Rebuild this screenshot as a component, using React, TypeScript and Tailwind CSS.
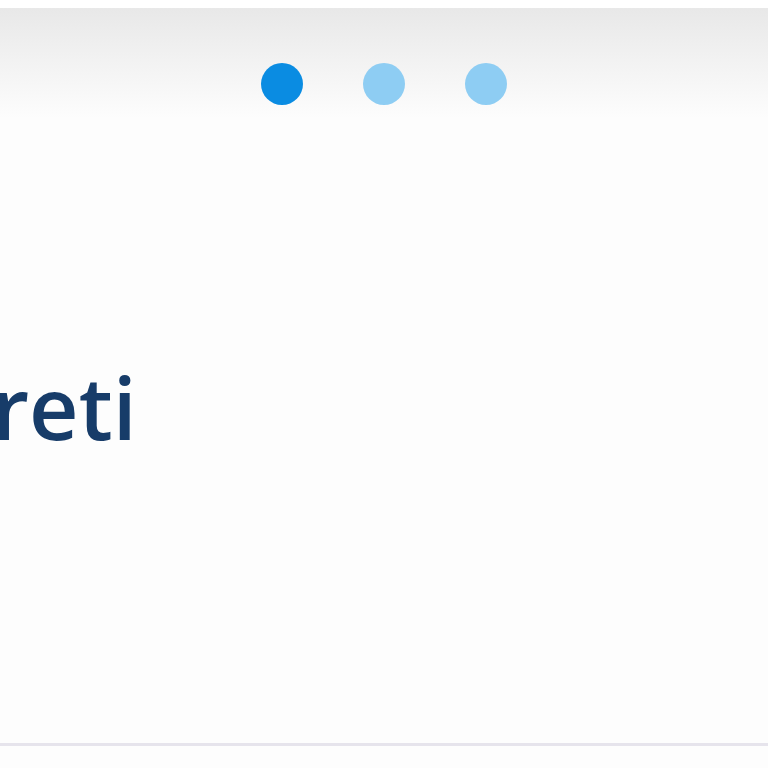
export default function App() {
  return (
    <div className="w-[768px] h-[768px] bg-[#fdfdfd] overflow-hidden flex flex-col" style={{ fontFamily: '"Open Sans", "Noto Sans", sans-serif' }}>
      <div className="h-[8px] bg-white" />
      <div className="h-[110px] bg-gradient-to-b from-[#e8e8e8] to-[#fdfdfd] flex justify-center gap-[60px] pt-[55px]">
        <div className="w-[42px] h-[42px] rounded-full bg-[#0a8ce2]" />
        <div className="w-[42px] h-[42px] rounded-full bg-[#8ecdf3]" />
        <div className="w-[42px] h-[42px] rounded-full bg-[#8ecdf3]" />
      </div>
      <div className="mt-[246px] h-[86px] leading-none text-[86px] font-semibold text-[#173c69] ml-[-8px] whitespace-nowrap">
        reti
      </div>
      <div className="mt-[293px] h-[3px] bg-[#e6e4ec]" />
    </div>
  );
}
